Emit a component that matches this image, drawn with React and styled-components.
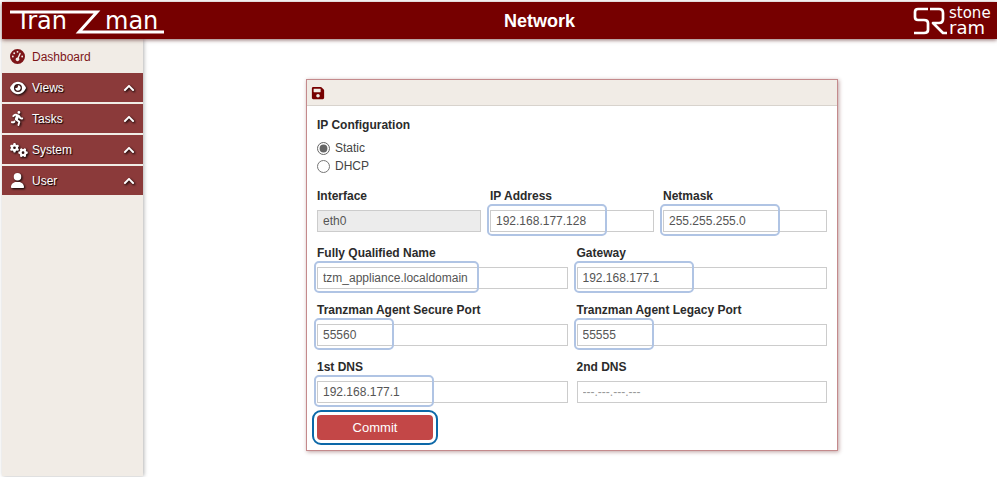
import React, { useState } from "react";
import styled, { createGlobalStyle } from "styled-components";
import { FaSave, FaChevronUp } from "react-icons/fa";
import { FaGaugeHigh, FaEye, FaPersonRunning, FaGears, FaUser } from "react-icons/fa6";

const menuItems = [
  { label: "Views", icon: FaEye, size: 16 },
  { label: "Tasks", icon: FaPersonRunning, size: 15 },
  { label: "System", icon: FaGears, size: 18 },
  { label: "User", icon: FaUser, size: 15 }
];

const fieldRows = [
  [
    { name: "interface", label: "Interface", disabled: true },
    { name: "ip", label: "IP Address", mark: 120 },
    { name: "netmask", label: "Netmask", mark: 120 }
  ],
  [
    { name: "fqdn", label: "Fully Qualified Name", mark: 165 },
    { name: "gateway", label: "Gateway", mark: 120 }
  ],
  [
    { name: "securePort", label: "Tranzman Agent Secure Port", mark: 80 },
    { name: "legacyPort", label: "Tranzman Agent Legacy Port", mark: 80 }
  ],
  [
    { name: "dns1", label: "1st DNS", mark: 120 },
    { name: "dns2", label: "2nd DNS", placeholder: "---.---.---.---" }
  ]
];

const TranzmanLogo = () => (
  <Logo width="156" height="33" viewBox="0 0 156 33" role="img" aria-label="Tranzman">
    <LogoText x="6" y="25" $size={24}>Tran</LogoText>
    <LogoText x="95" y="25" $size={24}>man</LogoText>
    <path d="M0 8H87L69 28H154" fill="none" stroke="#fff" strokeWidth="3" />
  </Logo>
);

const StoneRamLogo = () => (
  <Logo width="80" height="33" viewBox="0 0 80 33" role="img" aria-label="Stone Ram">
    <g fill="none" stroke="#fff" strokeWidth="2.7" strokeLinejoin="round">
      <path d="M15 5H5Q2 5 2 8V13Q2 16 5 16H11Q15 16 15 19V26Q15 29 11 29H1" />
      <path d="M17 5H26Q30 5 30 9V15Q30 19 26 19H20L30 29H34" />
    </g>
    <LogoText x="36" y="14" $size={15}>stone</LogoText>
    <LogoText x="36" y="30" $size={18}>ram</LogoText>
  </Logo>
);

const App = () => {
  const [mode, setMode] = useState("static");
  const [formData, setFormData] = useState({
    interface: "eth0",
    ip: "192.168.177.128",
    netmask: "255.255.255.0",
    fqdn: "tzm_appliance.localdomain",
    gateway: "192.168.177.1",
    securePort: "55560",
    legacyPort: "55555",
    dns1: "192.168.177.1",
    dns2: ""
  });

  const handleChange = (e) => {
    const { name, value } = e.target;
    setFormData(prevState => ({ ...prevState, [name]: value }));
  };

  const handleSubmit = (e) => {
    e.preventDefault();
  };

  return (
    <Page>
      <GlobalStyle />
      <Header>
        <TranzmanLogo />
        <Title>Network</Title>
        <StoneRamLogo />
      </Header>
      <Content>
        <Sidebar>
          <DashboardLink href="#dashboard">
            <FaGaugeHigh size={15} />
            Dashboard
          </DashboardLink>
          {menuItems.map(({ label, icon: Icon, size }) => (
            <MenuButton type="button" key={label}>
              <Icon size={size} />
              <span>{label}</span>
              <FaChevronUp size={12} />
            </MenuButton>
          ))}
        </Sidebar>
        <Main>
          <Panel onSubmit={handleSubmit}>
            <PanelHeader>
              <SaveButton type="submit" aria-label="Save">
                <FaSave size={14} />
              </SaveButton>
            </PanelHeader>
            <PanelBody>
              <ModeGroup>
                <Legend>IP Configuration</Legend>
                <RadioLabel>
                  <Radio
                    name="mode"
                    checked={mode === "static"}
                    onChange={() => setMode("static")}
                  />
                  Static
                </RadioLabel>
                <RadioLabel>
                  <Radio
                    name="mode"
                    checked={mode === "dhcp"}
                    onChange={() => setMode("dhcp")}
                  />
                  DHCP
                </RadioLabel>
              </ModeGroup>
              {fieldRows.map((row) => (
                <FieldRow key={row[0].name} $columns={row.length}>
                  {row.map((field) => (
                    <Field key={field.name}>
                      <Label htmlFor={field.name}>{field.label}</Label>
                      <InputWrap>
                        <Input
                          type="text"
                          id={field.name}
                          name={field.name}
                          value={formData[field.name]}
                          placeholder={field.placeholder}
                          disabled={field.disabled}
                          onChange={handleChange}
                        />
                        {field.mark && <Mark $width={field.mark} />}
                      </InputWrap>
                    </Field>
                  ))}
                </FieldRow>
              ))}
              <CommitButton type="submit">Commit</CommitButton>
            </PanelBody>
          </Panel>
        </Main>
      </Content>
    </Page>
  );
};

export default App;

const GlobalStyle = createGlobalStyle`
  * {
    box-sizing: border-box;
  }
  body {
    margin: 0;
    background-color: #fff;
    font-family: "Liberation Sans", Arial, sans-serif;
    font-size: 12px;
    color: #444;
  }
  button, input {
    font: inherit;
  }
`;

const Page = styled.div`
  display: flex;
  flex-direction: column;
  min-height: 100vh;
  padding: 2px 0 1px 2px;
`;

const Header = styled.header`
  position: relative;
  display: flex;
  align-items: center;
  justify-content: space-between;
  height: 37px;
  padding: 0 4px 0 8px;
  background-color: #760000;
  box-shadow: 0 1px 4px rgba(60, 0, 0, 0.6);
`;

const Logo = styled.svg`
  display: block;
`;

const LogoText = styled.text`
  fill: #fff;
  font-family: "DejaVu Sans", sans-serif;
  font-size: ${({ $size }) => $size}px;
`;

const Title = styled.h1`
  margin: 0;
  font-size: 18px;
  line-height: 20px;
  color: #fff;
`;

const Content = styled.div`
  display: flex;
  flex: 1;
`;

const Sidebar = styled.nav`
  display: flex;
  flex-direction: column;
  gap: 2px;
  width: 141px;
  padding-top: 3px;
  background-color: #f1ece6;
  box-shadow: 1px 0 4px rgba(0, 0, 0, 0.3);
`;

const DashboardLink = styled.a`
  display: flex;
  align-items: center;
  gap: 7px;
  height: 29px;
  padding: 0 8px;
  color: #7d1518;
  text-decoration: none;
`;

const MenuButton = styled.button`
  display: grid;
  grid-template-columns: 18px 1fr 12px;
  align-items: center;
  gap: 4px;
  height: 29px;
  padding: 0 8px;
  border: none;
  background-color: #8b3a3a;
  color: #fff;
  text-align: left;
  text-shadow: 1px 1px 1px #000;
  cursor: pointer;
  svg {
    filter: drop-shadow(1px 1px 1px #000);
  }
`;

const Main = styled.main`
  flex: 1;
  padding: 40px 159px 24px 163px;
`;

const Panel = styled.form`
  border: 1px solid #c48a8c;
  background-color: #fff;
  box-shadow: 1px 1px 4px rgba(90, 20, 20, 0.4);
`;

const PanelHeader = styled.div`
  display: flex;
  align-items: center;
  height: 26px;
  padding: 0 4px;
  border-bottom: 1px solid #d8d3cd;
  background-color: #f1ece6;
`;

const SaveButton = styled.button`
  display: flex;
  padding: 0;
  border: none;
  background: none;
  color: #760000;
  cursor: pointer;
`;

const PanelBody = styled.div`
  display: flex;
  flex-direction: column;
  gap: 12px;
  padding: 10px;
`;

const ModeGroup = styled.fieldset`
  margin: 0;
  padding: 0;
  border: none;
`;

const Legend = styled.legend`
  padding: 0;
  margin-bottom: 5px;
  font-weight: bold;
  line-height: 18px;
  color: #2b2b2b;
`;

const RadioLabel = styled.label`
  display: flex;
  align-items: center;
  gap: 5px;
  height: 18px;
`;

const Radio = styled.input.attrs({ type: "radio" })`
  width: 13px;
  height: 13px;
  margin: 0;
  accent-color: #666;
`;

const FieldRow = styled.div`
  display: grid;
  grid-template-columns: repeat(${({ $columns }) => $columns}, 1fr);
  gap: 9px;
`;

const Field = styled.div`
  display: flex;
  flex-direction: column;
  gap: 5px;
`;

const Label = styled.label`
  font-weight: bold;
  line-height: 18px;
  color: #2b2b2b;
`;

const InputWrap = styled.div`
  position: relative;
`;

const Input = styled.input`
  display: block;
  width: 100%;
  height: 22px;
  padding: 0 5px;
  border: 1px solid #ccc;
  background-color: #fff;
  color: #555;
  &:disabled {
    background-color: #ececec;
  }
  &::placeholder {
    color: #999;
  }
`;

/* highlight frame drawn over the part of the input that holds the value */
const Mark = styled.span`
  position: absolute;
  top: -6px;
  left: -3px;
  width: ${({ $width }) => $width}px;
  height: 32px;
  border: 2px solid #b0c4e4;
  border-radius: 5px;
  pointer-events: none;
`;

const CommitButton = styled.button`
  width: 116px;
  height: 25px;
  padding: 0;
  border: none;
  border-radius: 4px;
  background-color: #c34747;
  color: #fff;
  font-size: 13px;
  outline: 2px solid #0c68a8;
  outline-offset: 3px;
  cursor: pointer;
`;
